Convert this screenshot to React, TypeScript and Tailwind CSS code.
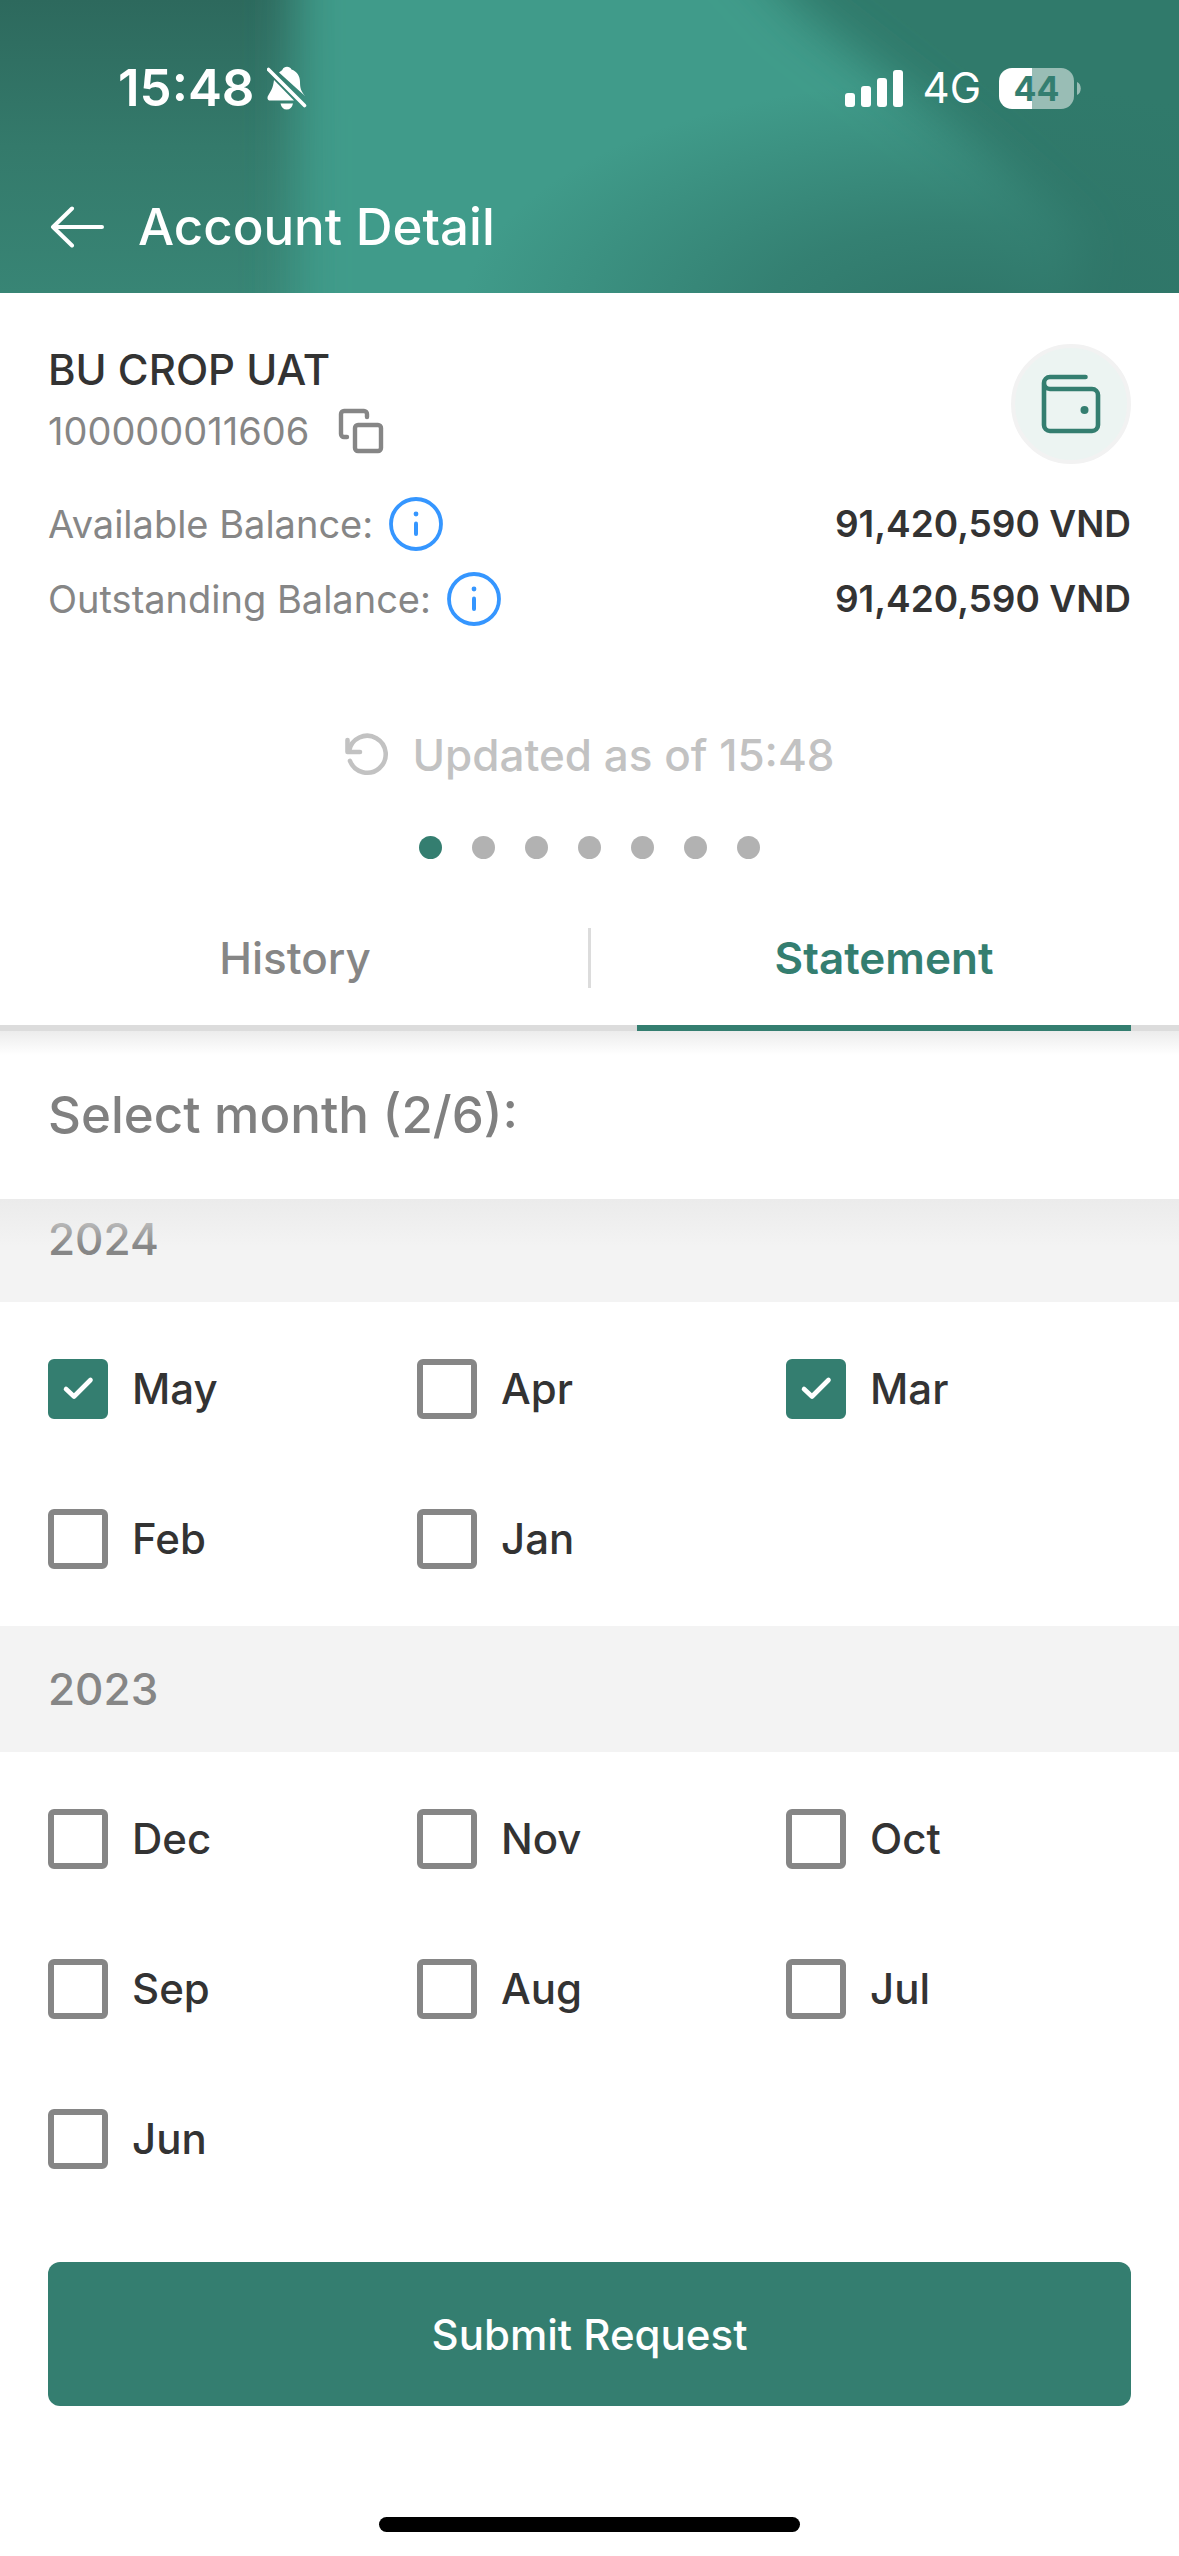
import { useState } from 'react';
import clsx from 'clsx';

type YearGroup = { year: number; months: string[] };

const YEARS: YearGroup[] = [
  { year: 2024, months: ['May', 'Apr', 'Mar', 'Feb', 'Jan'] },
  { year: 2023, months: ['Dec', 'Nov', 'Oct', 'Sep', 'Aug', 'Jul', 'Jun'] },
];
const MAX_MONTHS = 6;
const ACCOUNT_PAGES = 7;

const money = (n: number) => `${n.toLocaleString('en-US')} VND`;

function HeaderGlow() {
  return (
    <svg className="absolute inset-0 size-full" viewBox="0 0 1179 293" preserveAspectRatio="none" aria-hidden="true">
      <defs>
        <filter id="soft" x="-30%" y="-50%" width="160%" height="200%">
          <feGaussianBlur stdDeviation="24" />
        </filter>
        <radialGradient id="shade">
          <stop offset="0" stopColor="#2f7568" />
          <stop offset="0.4" stopColor="#2f7568" stopOpacity="0.7" />
          <stop offset="1" stopColor="#2f7568" stopOpacity="0" />
        </radialGradient>
        <linearGradient id="left" x1="0" y1="0" x2="0" y2="1">
          <stop offset="0" stopColor="#2d695d" />
          <stop offset="0.5" stopColor="#347a6b" />
          <stop offset="1" stopColor="#388575" />
        </linearGradient>
      </defs>
      <rect width="1179" height="293" fill="#307a6b" />
      <rect width="420" height="293" fill="url(#left)" />
      <path d="M295-100H700L800 10 980 150 1080 240 1040 400H295Z" fill="#419b8a" filter="url(#soft)" />
      <ellipse cx="960" cy="320" rx="500" ry="240" fill="url(#shade)" />
    </svg>
  );
}

function StatusBar() {
  return (
    <div className="flex h-14 items-center justify-between pr-[98px] pl-[118px]">
      <div className="flex items-center gap-3">
        <span className="text-[51px] leading-14 font-semibold">15:48</span>
        <svg className="h-11 w-10" viewBox="0 0 40 44" fill="currentColor" aria-label="Silent">
          <path d="M7 14C6 22 4 25 1.500 29 -0.500 32 0.500 34.500 3.500 34.500H27Z" />
          <path d="M12 6.500C14 4.800 15 4.600 15.500 3.500 17-0.200 23-0.200 24.500 3.500 30 5.500 33 10 33 16 33 22 34 25 38 30Z" />
          <path d="M13.500 37.500H26C25 41.500 23 43.500 19.700 43.500S14.500 41.500 13.500 37.500Z" />
          <path d="M1.500 3.500 37.500 39.500" stroke="currentColor" strokeWidth="3.600" strokeLinecap="round" />
        </svg>
      </div>
      <div className="flex items-center">
        <svg className="h-[37px] w-[58px]" viewBox="0 0 58 37" fill="currentColor" aria-label="Signal">
          <rect y="23" width="10" height="14" rx="3" />
          <rect x="16" y="16" width="10" height="21" rx="3" />
          <rect x="32" y="8" width="10" height="29" rx="3" />
          <rect x="48" width="10" height="37" rx="3" />
        </svg>
        <span className="ml-5 text-[42px] leading-14">4G</span>
        <div className="ml-[18px] flex h-[41px] w-[75px] items-center justify-center rounded-[13px] bg-[linear-gradient(90deg,#fff_44%,#99bdb5_44%)] text-[34px] font-bold text-[#347e70]">
          44
        </div>
        <svg className="ml-[3px] h-[13px] w-1" viewBox="0 0 4 13" fill="#99bdb5" aria-hidden="true">
          <path d="M0 0C5 2 5 11 0 13Z" />
        </svg>
      </div>
    </div>
  );
}

function InfoIcon() {
  return (
    <svg className="size-[54px]" viewBox="0 0 54 54" fill="none" stroke="#3596ff" aria-hidden="true">
      <circle cx="27" cy="27" r="25" strokeWidth="3.800" />
      <path d="M27 26.500V37" strokeWidth="4" strokeLinecap="round" />
      <circle cx="27" cy="17" r="2.400" fill="#3596ff" stroke="none" />
    </svg>
  );
}

function BalanceRow({ label, amount }: { label: string; amount: number }) {
  return (
    <div className="flex h-[54px] items-center justify-between">
      <div className="flex items-center gap-4">
        <span className="text-[38px] text-[#868686]">{label}</span>
        <button type="button" aria-label={`About ${label}`}>
          <InfoIcon />
        </button>
      </div>
      <span className="text-[37px] font-semibold">{money(amount)}</span>
    </div>
  );
}

function AccountSummary() {
  return (
    <section className="px-12 pt-[51px]">
      <div className="flex items-start justify-between">
        <div>
          <h2 className="text-[42px] leading-[52px] font-medium">BU CROP UAT</h2>
          <div className="mt-2 flex h-[54px] items-center gap-7 text-[#868686]">
            <span className="text-[38px]">100000011606</span>
            <button type="button" aria-label="Copy account number">
              <svg className="size-12" viewBox="0 0 48 48" fill="none" stroke="currentColor" strokeWidth="4.400" strokeLinecap="round">
                <rect x="18" y="18" width="26" height="26" rx="3" />
                <path d="M30 10V7a3 3 0 0 0-3-3H7a3 3 0 0 0-3 3v20a3 3 0 0 0 3 3h3" />
              </svg>
            </button>
          </div>
        </div>
        <div className="flex size-[120px] items-center justify-center rounded-full border-4 border-[#f2f2f2] bg-[#ecf4f2]">
          <svg className="size-[60px]" viewBox="0 0 60 60" fill="none" stroke="#347e70" strokeWidth="4.600" strokeLinecap="round" aria-hidden="true">
            <path d="M44.500 3H9a6 6 0 0 0 0 12h42a6 6 0 0 1 6 6v30a6 6 0 0 1-6 6H9a6 6 0 0 1-6-6V9" />
            <circle cx="43.500" cy="36" r="4" fill="#347e70" stroke="none" />
          </svg>
        </div>
      </div>
      <div className="mt-[33px] flex flex-col gap-[21px]">
        <BalanceRow label="Available Balance:" amount={91420590} />
        <BalanceRow label="Outstanding Balance:" amount={91420590} />
      </div>
      <button type="button" className="mx-auto mt-[102px] flex h-[54px] items-center gap-5 text-[44px] font-medium text-[#c2c2c2]">
        <svg className="size-12" viewBox="0 0 48 48" fill="none" stroke="currentColor" strokeWidth="4.600" strokeLinecap="round" strokeLinejoin="round" aria-hidden="true">
          <path d="M3.500 9V21H16" />
          <path d="M5 20A18.500 18.500 0 1 1 6 30" />
        </svg>
        Updated as of 15:48
      </button>
      <div className="mt-[54px] flex justify-center gap-[30px]">
        {Array.from({ length: ACCOUNT_PAGES }, (_, i) => (
          <span key={i} className={clsx('size-[23px] rounded-full', i === 0 ? 'bg-[#347e70]' : 'bg-[#b2b2b2]')} />
        ))}
      </div>
    </section>
  );
}

function Tabs() {
  return (
    <nav className="mt-8 flex border-b-6 border-[#dcdcdc] px-12 text-[44px]">
      <button type="button" className="h-[134px] flex-1 font-medium text-[#868686]">History</button>
      <span className="mx-[46px] h-[60px] w-[3px] self-center bg-[#dcdcdc]" />
      <button type="button" className="-mb-1.5 h-[140px] flex-1 border-b-6 border-[#347e70] font-semibold text-[#347e70]">
        Statement
      </button>
    </nav>
  );
}

function MonthBox({ month, checked, onToggle }: { month: string; checked: boolean; onToggle: () => void }) {
  return (
    <label className="flex h-[60px] items-center gap-6 text-[42px] leading-[58px] font-medium">
      <span className="relative size-[60px]">
        <input
          type="checkbox"
          checked={checked}
          onChange={onToggle}
          className="block size-[60px] appearance-none rounded-md border-6 border-[#868686] checked:border-[#347e70] checked:bg-[#347e70]"
        />
        {checked && (
          <svg className="pointer-events-none absolute inset-0 size-[60px]" viewBox="0 0 60 60" fill="none" stroke="#fff" strokeWidth="4.600" strokeLinecap="round" strokeLinejoin="round" aria-hidden="true">
            <path d="M18 30 26 37.500 42.500 21" />
          </svg>
        )}
      </span>
      {month}
    </label>
  );
}

export default function App() {
  const [selected, setSelected] = useState<string[]>(['2024-May', '2024-Mar']);

  const toggle = (key: string) => {
    if (selected.includes(key)) setSelected(selected.filter((k) => k !== key));
    else if (selected.length < MAX_MONTHS) setSelected([...selected, key]);
  };

  return (
    <div className="flex min-h-screen flex-col bg-white font-['Inter','Liberation_Sans',sans-serif] text-[#333]">
      <header className="relative overflow-hidden text-white">
        <HeaderGlow />
        <div className="relative pt-[60px] pb-9">
          <StatusBar />
          <div className="mt-[81px] flex h-[60px] items-center gap-[30px] px-12">
            <button type="button" aria-label="Back">
              <svg className="h-[42px] w-[60px]" viewBox="0 0 60 42" fill="none" stroke="currentColor" strokeWidth="4" strokeLinecap="round" strokeLinejoin="round">
                <path d="M54 21H5M24 2.500 5 21 24 39.500" />
              </svg>
            </button>
            <h1 className="text-[51px] font-medium">Account Detail</h1>
          </div>
        </div>
      </header>

      <AccountSummary />
      <Tabs />

      <div className="flex h-[168px] items-center bg-[linear-gradient(#ececec,#fff_24px)] px-12 text-[51px] font-medium text-[#808080]">
        Select month ({selected.length}/{MAX_MONTHS}):
      </div>

      {YEARS.map(({ year, months }, i) => (
        <section key={year}>
          <h3
            className={clsx(
              'relative flex items-end bg-[#f3f3f3] px-12 pb-[33px] text-[44px] leading-[60px] font-medium text-[#868686]',
              i === 0 ? 'pt-2.5' : 'pt-[33px]',
            )}
          >
            {year}
            {i === 0 && <span className="absolute inset-x-0 top-0 h-12 bg-linear-to-b from-[#ebebeb] to-transparent" />}
          </h3>
          <div className="grid grid-cols-3 gap-x-6 gap-y-[90px] px-12 py-[57px]">
            {months.map((month) => {
              const key = `${year}-${month}`;
              return <MonthBox key={key} month={month} checked={selected.includes(key)} onToggle={() => toggle(key)} />;
            })}
          </div>
        </section>
      ))}

      <footer className="mt-auto px-12 pt-9 pb-6">
        <button type="button" className="h-36 w-full rounded-xl bg-[#347e70] text-[42px] font-medium text-white">
          Submit Request
        </button>
        <div className="mx-auto mt-[111px] h-[15px] w-[421px] rounded-full bg-black" />
      </footer>
    </div>
  );
}
